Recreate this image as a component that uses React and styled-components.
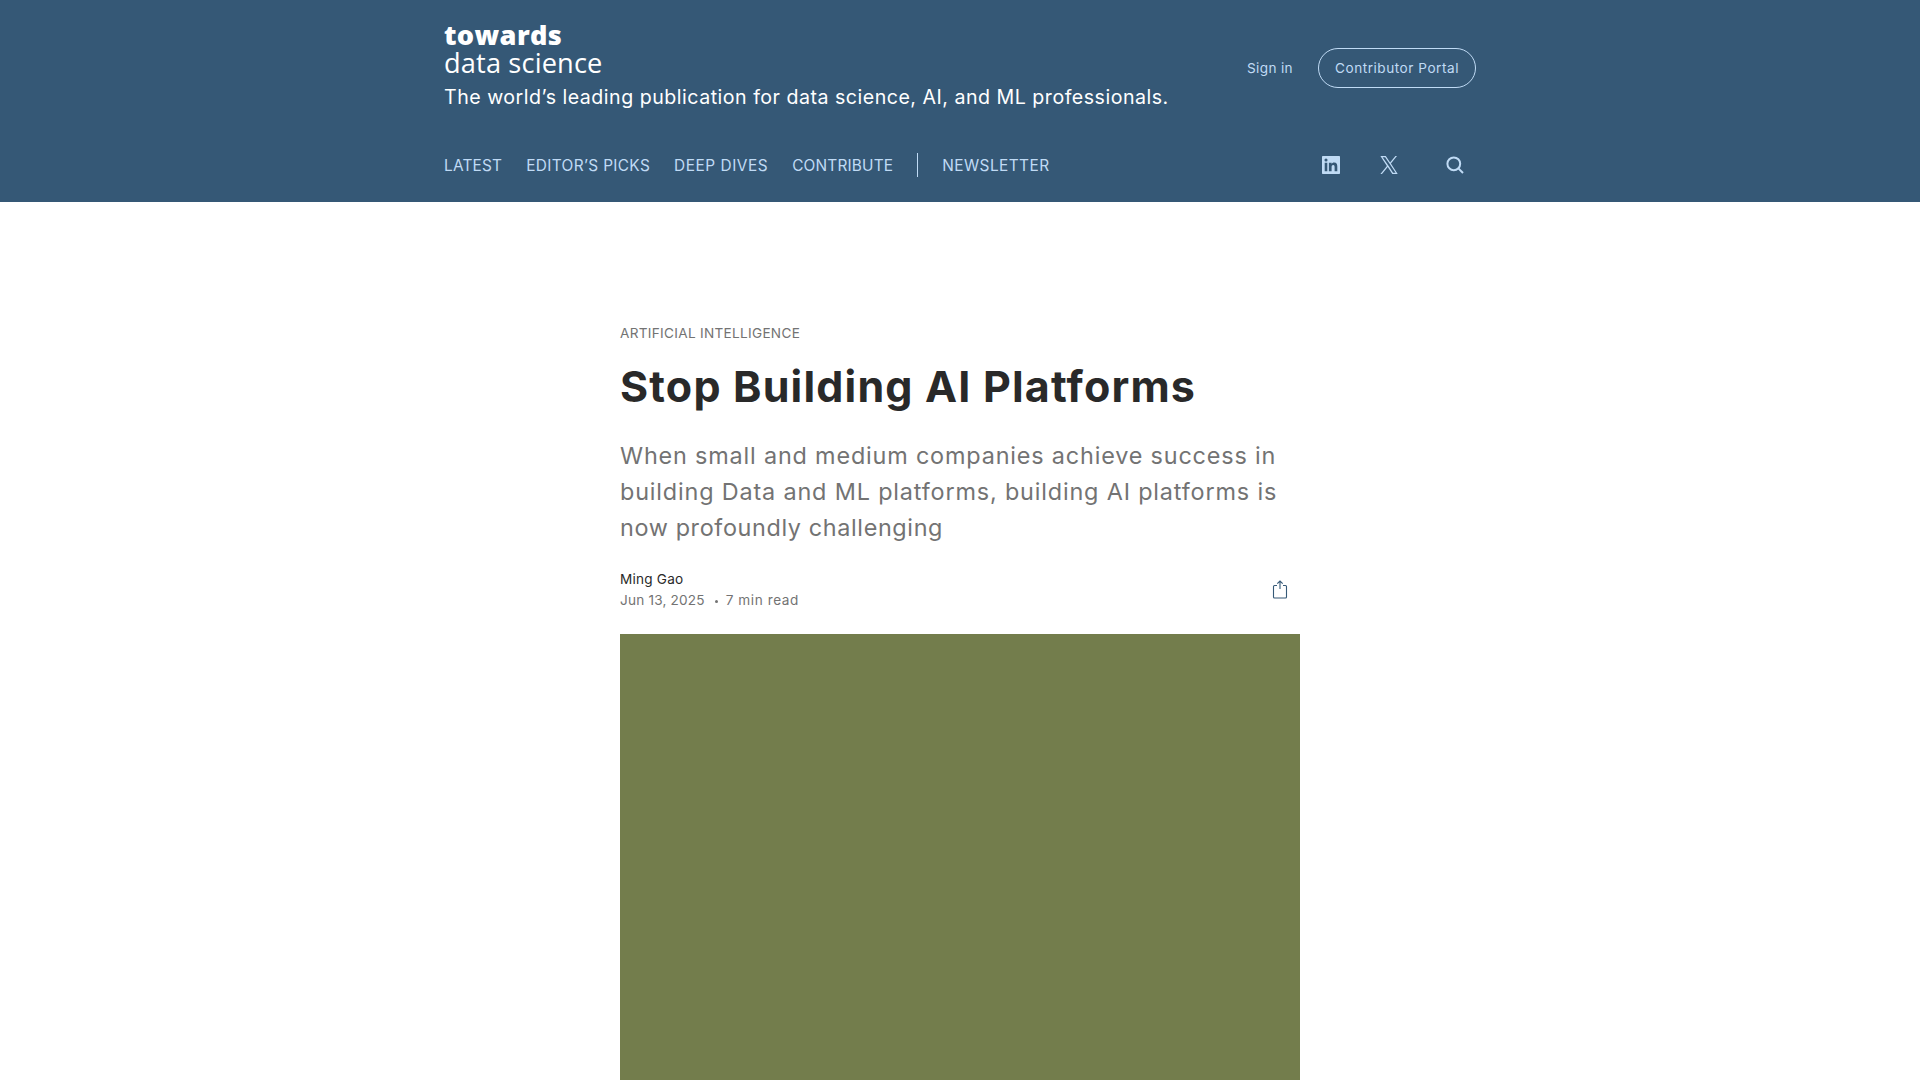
import React from "react";
import styled, { createGlobalStyle } from "styled-components";

const GlobalStyle = createGlobalStyle`
  *, *::before, *::after { box-sizing: border-box; }
  html, body { margin: 0; height: 100%; overflow: hidden; background: #fff; }
  body { font-family: Inter, "Liberation Sans", sans-serif; }
  h1, p { margin: 0; }
  a { color: inherit; text-decoration: none; }
  svg { display: block; }
`;

const Page = styled.div`
  display: flex;
  flex-direction: column;
  height: 1080px;
  overflow: hidden;
`;

const Header = styled.header`
  display: flex;
  flex-direction: column;
  align-items: center;
  flex: none;
  height: 202px;
  padding-top: 21px;
  background: #355876;
  color: #c0dbf5;
`;

const Masthead = styled.div`
  display: flex;
  justify-content: space-between;
  width: 1032px;
  height: 90px;
`;

const Brand = styled.div`
  display: flex;
  flex-direction: column;
  color: #fff;
`;

const LogoLine = styled.span`
  font-family: "Open Sans", "Noto Sans", sans-serif;
  font-size: 27.2px;
  line-height: ${(p) => (p.$strong ? 28 : 27)}px;
  white-space: nowrap;
  font-weight: ${(p) => (p.$strong ? 800 : 380)};
  letter-spacing: ${(p) => (p.$strong ? 0.35 : 0.15)}px;
`;

const Tagline = styled.p`
  margin-top: 7px;
  font-size: 19.6px;
  line-height: 28px;
  letter-spacing: 0.5px;
  white-space: nowrap;
`;

const Account = styled.div`
  display: flex;
  align-items: center;
  gap: 25px;
  height: 40px;
  margin-top: 27px;
  font-size: 13.6px;
  white-space: nowrap;
`;

const SignIn = styled.a`
  letter-spacing: 0.35px;
`;

const PortalButton = styled.a`
  display: flex;
  align-items: center;
  justify-content: center;
  width: 158px;
  height: 40px;
  border: 1px solid #c0dbf5;
  border-radius: 20px;
  letter-spacing: 0.53px;
`;

const NavBar = styled.div`
  display: flex;
  justify-content: space-between;
  align-items: center;
  width: 1032px;
  height: 24px;
  margin-top: 42px;
`;

const NavLinks = styled.nav`
  display: flex;
  align-items: center;
  gap: 24px;
  font-size: 15.4px;
  line-height: 24px;
  white-space: nowrap;
`;

const NavLink = styled.a`
  padding-top: 1px;
  letter-spacing: ${(p) => p.$track}px;
`;

const Divider = styled.span`
  width: 1px;
  height: 24px;
  background: #c0dbf5;
`;

const Socials = styled.div`
  display: flex;
  align-items: center;
  gap: 40px;
  padding-right: 12px;
`;

const SearchButton = styled.a`
  margin-left: 8px;
`;

const Article = styled.main`
  display: flex;
  flex-direction: column;
  flex: 1;
  width: 680px;
  margin: 0 auto;
  padding-top: 121px;
  color: #737373;
`;

const Category = styled.a`
  font-size: 13.6px;
  line-height: 20px;
  letter-spacing: 0.3px;
`;

const Title = styled.h1`
  margin-top: 18px;
  font-size: 43px;
  font-weight: 700;
  line-height: 50px;
  letter-spacing: 1.18px;
  white-space: nowrap;
  color: #292929;
`;

const Subtitle = styled.p`
  display: flex;
  flex-direction: column;
  margin-top: 27px;
  font-size: 23.4px;
  line-height: 36px;
  white-space: nowrap;
`;

const SubtitleLine = styled.span`
  letter-spacing: ${(p) => p.$track}px;
`;

const Byline = styled.div`
  display: flex;
  align-items: center;
  justify-content: space-between;
  margin-top: 23px;
  padding-right: 12px;
  font-size: 13.6px;
  line-height: 21px;
`;

const Author = styled.div`
  color: #292929;
  letter-spacing: 0.22px;
`;

const Meta = styled.div`
  display: flex;
  align-items: center;
`;

const PublishDate = styled.time`
  letter-spacing: 0.19px;
`;

const Dot = styled.span`
  width: 3px;
  height: 3px;
  margin: 1px 8px 0 10px;
  border-radius: 50%;
  background: #737373;
`;

const ReadTime = styled.span`
  letter-spacing: 0.57px;
`;

const Hero = styled.figure`
  flex: 1;
  margin: 23px 0 0;
  background: #737d4c;
`;

const LinkedInIcon = () => (
  <svg width="18" height="18" viewBox="0 0 18 18">
    <path
      fill="#c0dbf5"
      fillRule="evenodd"
      d="M1 0h16c.6 0 1 .4 1 1v16c0 .6-.4 1-1 1H1c-.6 0-1-.4-1-1V1C0 .4.4 0 1 0ZM2.7 6.8v8.5h2.6V6.8ZM4 2.5a1.55 1.55 0 1 0 0 3.1 1.55 1.55 0 0 0 0-3.1ZM6.9 6.8v8.5h2.7v-4.2c0-1.1.2-2.2 1.6-2.2s1.4 1.3 1.4 2.3v4.1h2.7v-4.7c0-2.3-.5-4-3.2-4-1.3 0-2.1.7-2.5 1.4V6.8Z"
    />
  </svg>
);

const XIcon = () => (
  <svg width="18" height="18" viewBox="0 0 18 18">
    <path
      fill="#c0dbf5"
      fillRule="evenodd"
      d="M10.9 7.6 17 0h-1.6l-5.3 6.6L5.8 0H.4l6.5 9.9L.4 18H2l5.7-7.1 4.6 7.1h5.4ZM8.7 10.1l-.7-1L2.6 1.2h2.5l4.3 6.3.7 1 5.5 8.3h-2.5Z"
    />
  </svg>
);

const SearchIcon = () => (
  <svg width="18" height="18" viewBox="0 0 18 18" fill="none" stroke="#c0dbf5" strokeWidth="2">
    <circle cx="7.8" cy="7.8" r="6.4" />
    <path d="m12.4 12.4 4.6 4.6" />
  </svg>
);

const ShareIcon = () => (
  <svg width="16" height="20" viewBox="0 0 16 20" fill="none" stroke="#365977" strokeWidth="1.1">
    <path d="M5 5.5H2.5a1 1 0 0 0-1 1V17a1 1 0 0 0 1 1h11a1 1 0 0 0 1-1V6.5a1 1 0 0 0-1-1H11" />
    <path d="M8 9V1.2M5.3 3.7 8 1l2.7 2.7" />
  </svg>
);

const sections = [
  { label: "LATEST", track: 0.2 },
  { label: "EDITOR’S PICKS", track: 0.34 },
  { label: "DEEP DIVES", track: 0.53 },
  { label: "CONTRIBUTE", track: 0.18 },
];

const summary = [
  { text: "When small and medium companies achieve success in", track: 0.83 },
  { text: "building Data and ML platforms, building AI platforms is", track: 0.84 },
  { text: "now profoundly challenging", track: 0.63 },
];

export default function App() {
  return (
    <Page>
      <GlobalStyle />
      <Header>
        <Masthead>
          <Brand>
            <LogoLine $strong>towards</LogoLine>
            <LogoLine>data science</LogoLine>
            <Tagline>
              The world’s leading publication for data science, AI, and ML professionals.
            </Tagline>
          </Brand>
          <Account>
            <SignIn href="#">Sign in</SignIn>
            <PortalButton href="#">Contributor Portal</PortalButton>
          </Account>
        </Masthead>
        <NavBar>
          <NavLinks>
            {sections.map((s) => (
              <NavLink key={s.label} href="#" $track={s.track}>
                {s.label}
              </NavLink>
            ))}
            <Divider />
            <NavLink href="#" $track={0.44}>NEWSLETTER</NavLink>
          </NavLinks>
          <Socials>
            <a href="#"><LinkedInIcon /></a>
            <a href="#"><XIcon /></a>
            <SearchButton href="#"><SearchIcon /></SearchButton>
          </Socials>
        </NavBar>
      </Header>
      <Article>
        <Category href="#">ARTIFICIAL INTELLIGENCE</Category>
        <Title>Stop Building AI Platforms</Title>
        <Subtitle>
          {summary.map((l) => (
            <SubtitleLine key={l.text} $track={l.track}>{l.text}</SubtitleLine>
          ))}
        </Subtitle>
        <Byline>
          <div>
            <Author>Ming Gao</Author>
            <Meta>
              <PublishDate>Jun 13, 2025</PublishDate>
              <Dot />
              <ReadTime>7 min read</ReadTime>
            </Meta>
          </div>
          <ShareIcon />
        </Byline>
        <Hero />
      </Article>
    </Page>
  );
}
